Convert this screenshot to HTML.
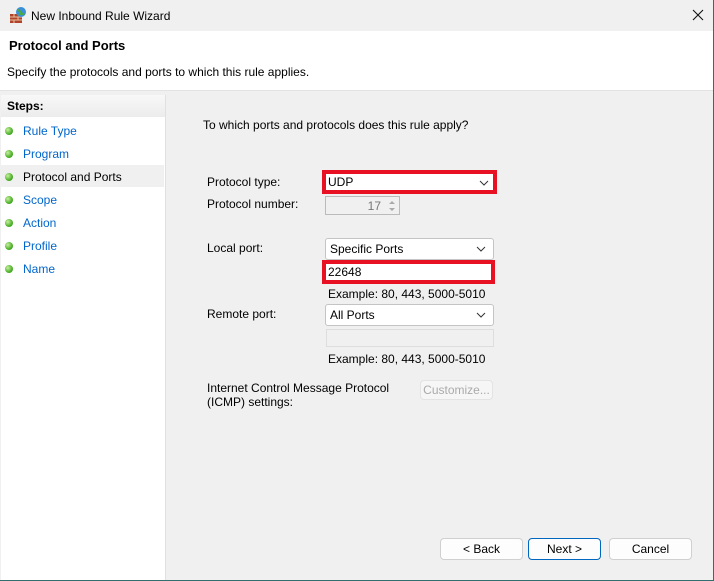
<!DOCTYPE html>
<html><head><style>
*{box-sizing:border-box;margin:0;padding:0}
body{width:714px;height:581px;overflow:hidden;background:#f0f0f0;font-family:"Liberation Sans",sans-serif;font-size:12px;color:#000;position:relative}
.a{position:absolute}
.title{left:0;top:0;width:714px;height:31px;background:#f0f0f0}
.hdr{left:0;top:31px;width:714px;height:60px;background:#fff;border-bottom:1px solid #e3e3e3}
.left{left:1px;top:95px;width:165px;height:486px;background:#fff;border-right:1px solid #e0e0e0}
.steps{left:1px;top:95px;width:164px;height:22px;background:linear-gradient(#f8f8f8,#ececec);font-weight:bold;padding:4px 0 0 6px}
.item{left:23px;color:#0066cc}
.dot{width:8px;height:8px;border-radius:50%;background:radial-gradient(circle at 35% 35%,#c8f0a0,#4db02a 60%,#2f8a18);left:5px}
.combo{background:#fff;border:1px solid #c4c4c4;border-radius:3px;height:22px;padding:3px 0 0 4px}
.chev{position:absolute;right:6px;top:4px;width:12px;height:12px}
.red{border:4px solid #e81123;border-radius:0;padding:1px 0 0 2px;background:#fff}
.btn{height:22px;background:#fdfdfd;border:1px solid #d0d0d0;border-radius:4px;text-align:center;padding-top:3px}
</style></head><body>
<div class="a title"></div>
<svg class="a" style="left:9px;top:6px" width="18" height="18" viewBox="0 0 18 18"><rect x="1" y="8" width="12" height="9" fill="#b0442a"/><path d="M1 11h12M1 14h12M5 8v3M9 11v3M5 14v3" stroke="#e9c0a0" stroke-width="1"/><circle cx="12" cy="6" r="5" fill="#3a8fd8"/><path d="M9 4q3 1 2 4q3-1 4 1" stroke="#4caa3a" stroke-width="2" fill="none"/></svg>
<div class="a" style="left:31px;top:9px">New Inbound Rule Wizard</div>
<svg class="a" style="left:692px;top:9px" width="12" height="12"><path d="M1 1L11 11M11 1L1 11" stroke="#111" stroke-width="1.1"/></svg>
<div class="a hdr"></div>
<div class="a" style="left:9px;top:38px;font-size:13px;font-weight:bold">Protocol and Ports</div>
<div class="a" style="left:7px;top:65px">Specify the protocols and ports to which this rule applies.</div>
<div class="a left"></div>
<div class="a steps">Steps:</div>
<div class="a" style="left:1px;top:165px;width:163px;height:22px;background:#f0f0f0"></div>
<div class="a dot" style="top:127px"></div><div class="a item" style="top:124px">Rule Type</div>
<div class="a dot" style="top:150px"></div><div class="a item" style="top:147px">Program</div>
<div class="a dot" style="top:173px"></div><div class="a item" style="top:170px;color:#000">Protocol and Ports</div>
<div class="a dot" style="top:196px"></div><div class="a item" style="top:193px">Scope</div>
<div class="a dot" style="top:219px"></div><div class="a item" style="top:216px">Action</div>
<div class="a dot" style="top:242px"></div><div class="a item" style="top:239px">Profile</div>
<div class="a dot" style="top:265px"></div><div class="a item" style="top:262px">Name</div>

<div class="a" style="left:203px;top:118px">To which ports and protocols does this rule apply?</div>
<div class="a" style="left:207px;top:175px">Protocol type:</div>
<div class="a combo red" style="left:322px;top:170px;width:175px;height:24px">UDP<svg class="chev" style="top:3px;right:3px" viewBox="0 0 12 12"><path d="M2 4l4 4 4-4" stroke="#333" fill="none"/></svg></div>
<div class="a" style="left:207px;top:197px">Protocol number:</div>
<div class="a" style="left:325px;top:196px;width:75px;height:19px;border:1px solid #bbb;background:#f0f0f0;color:#777;text-align:right;padding:2px 18px 0 0">17
<svg class="a" style="right:2px;top:2px" width="10" height="14"><path d="M2 5l3-3 3 3z M2 9l3 3 3-3z" fill="#aaa"/></svg></div>
<div class="a" style="left:207px;top:241px">Local port:</div>
<div class="a combo" style="left:325px;top:238px;width:169px">Specific Ports<svg class="chev" viewBox="0 0 12 12"><path d="M2 4l4 4 4-4" stroke="#333" fill="none"/></svg></div>
<div class="a combo red" style="left:322px;top:260px;width:173px;height:24px;padding-top:1px">22648</div>
<div class="a" style="left:328px;top:287px">Example: 80, 443, 5000-5010</div>
<div class="a" style="left:207px;top:307px">Remote port:</div>
<div class="a combo" style="left:325px;top:304px;width:169px">All Ports<svg class="chev" viewBox="0 0 12 12"><path d="M2 4l4 4 4-4" stroke="#333" fill="none"/></svg></div>
<div class="a" style="left:326px;top:329px;width:168px;height:18px;border:1px solid #ddd;background:#f0f0f0"></div>
<div class="a" style="left:328px;top:352px">Example: 80, 443, 5000-5010</div>
<div class="a" style="left:207px;top:381px;line-height:14px">Internet Control Message Protocol<br>(ICMP) settings:</div>
<div class="a btn" style="left:420px;top:380px;width:73px;height:20px;color:#aaa;border-color:#e3e3e3;background:#f6f6f6;padding-top:2px">Customize...</div>

<div class="a btn" style="left:440px;top:538px;width:83px">&lt; Back</div>
<div class="a btn" style="left:528px;top:538px;width:73px;border-color:#0067c0">Next &gt;</div>
<div class="a btn" style="left:609px;top:538px;width:83px">Cancel</div>
<div class="a" style="left:713px;top:0;width:1px;height:581px;background:#2f6f6f"></div>
<div class="a" style="left:0;top:580px;width:714px;height:1px;background:#2f6f6f"></div>
</body></html>
